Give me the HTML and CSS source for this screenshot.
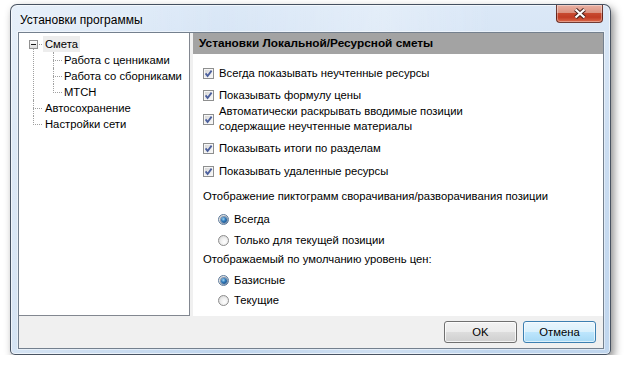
FILE: index.html
```html
<!DOCTYPE html>
<html lang="ru">
<head>
<meta charset="utf-8">
<title>Установки программы</title>
<link rel="stylesheet" href="styles.css">
</head>
<body>
<div class="window">
  <div class="titlebar">
    <span class="title">Установки программы</span>
    <button class="close" aria-label="Закрыть">
      <svg width="14" height="11" viewBox="0 0 14 11"><path d="M2.5 1.5l9 8M11.5 1.5l-9 8" stroke="#4a231d" stroke-width="4.2" fill="none"/><path d="M2.5 1.5l9 8M11.5 1.5l-9 8" stroke="#fff" stroke-width="2.2" fill="none"/></svg>
    </button>
  </div>
  <div class="client">
    <div class="main">
      <div class="tree">
        <ul class="tree-root">
          <li><span class="twisty"></span><span class="lbl sel">Смета</span>
            <ul class="tree-sub">
              <li><span class="lbl">Работа с ценниками</span></li>
              <li><span class="lbl">Работа со сборниками</span></li>
              <li><span class="lbl">МТСН</span></li>
            </ul>
          </li>
          <li><span class="lbl">Автосохранение</span></li>
          <li><span class="lbl">Настройки сети</span></li>
        </ul>
      </div>
      <div class="panel">
        <div class="panel-head">Установки Локальной/Ресурсной сметы</div>
        <div class="panel-body">
          <div class="checks">
            <label class="check"><span class="cb"><svg width="9" height="9" viewBox="0 0 9 9"><path d="M1.6 4.4L3.6 7L7.6 1.6" stroke="#4b5f9d" stroke-width="1.8" fill="none"/></svg></span>Всегда показывать неучтенные ресурсы</label>
            <label class="check"><span class="cb"><svg width="9" height="9" viewBox="0 0 9 9"><path d="M1.6 4.4L3.6 7L7.6 1.6" stroke="#4b5f9d" stroke-width="1.8" fill="none"/></svg></span>Показывать формулу цены</label>
            <label class="check multi"><span class="cb"><svg width="9" height="9" viewBox="0 0 9 9"><path d="M1.6 4.4L3.6 7L7.6 1.6" stroke="#4b5f9d" stroke-width="1.8" fill="none"/></svg></span><span>Автоматически раскрывать вводимые позиции<br>содержащие неучтенные материалы</span></label>
            <label class="check"><span class="cb"><svg width="9" height="9" viewBox="0 0 9 9"><path d="M1.6 4.4L3.6 7L7.6 1.6" stroke="#4b5f9d" stroke-width="1.8" fill="none"/></svg></span>Показывать итоги по разделам</label>
            <label class="check"><span class="cb"><svg width="9" height="9" viewBox="0 0 9 9"><path d="M1.6 4.4L3.6 7L7.6 1.6" stroke="#4b5f9d" stroke-width="1.8" fill="none"/></svg></span>Показывать удаленные ресурсы</label>
          </div>
          <div class="group g-icons">
            <div class="group-label">Отображение пиктограмм сворачивания/разворачивания позиции</div>
            <div class="radios">
              <label class="radio first"><span class="rb on"></span>Всегда</label>
              <label class="radio"><span class="rb"></span>Только для текущей позиции</label>
            </div>
          </div>
          <div class="group g-prices">
            <div class="group-label">Отображаемый по умолчанию уровень цен:</div>
            <div class="radios">
              <label class="radio first"><span class="rb on"></span>Базисные</label>
              <label class="radio"><span class="rb"></span>Текущие</label>
            </div>
          </div>
        </div>
      </div>
    </div>
    <div class="footer">
      <button class="btn">OK</button>
      <button class="btn default">Отмена</button>
    </div>
  </div>
</div>
</body>
</html>
```
FILE: styles.css
```css
* { box-sizing: border-box; }
html, body { margin: 0; background: #fff; }
body {
  font-family: "Liberation Sans", Arial, sans-serif;
  font-size: 11.25px;
  color: #000;
}

.window {
  width: 601px;
  height: 351px;
  margin: 4px 0 0 10px;
  border: 1px solid rgba(35, 45, 60, 0.8);
  border-radius: 7px 7px 5px 5px;
  padding: 0 6px 5px 7px;
  display: flex;
  flex-direction: column;
  background:
    linear-gradient(90deg, rgba(255,255,255,0.35) 0%, rgba(255,255,255,0) 35%, rgba(255,255,255,0.25) 62%, rgba(255,255,255,0) 80%),
    linear-gradient(180deg, #dbe8f7 0%, #cbddf1 40%, #c0d6ee 100%);
  box-shadow: inset 0 0 0 1px rgba(255,255,255,0.6), 3px 4px 8px rgba(0,0,0,0.45);
}

.titlebar {
  height: 27px;
  display: flex;
  justify-content: space-between;
  align-items: flex-start;
}
.title {
  padding: 7px 0 0 2px;
  line-height: 16px;
  font-size: 12px;
  text-shadow: 0 0 6px rgba(255,255,255,0.9);
}
.close {
  width: 47px;
  height: 18px;
  margin-right: 1px;
  padding: 0;
  border: 1px solid rgba(80, 30, 25, 0.8);
  border-top: none;
  border-radius: 0 0 4px 4px;
  display: flex;
  align-items: center;
  justify-content: center;
  background: linear-gradient(180deg, #eab0a2 0%, #dc9482 44%, #c7492f 50%, #c13c24 72%, #dc6a4b 100%);
  box-shadow: inset 0 0 0 1px rgba(255,255,255,0.35);
}

.client {
  height: 317px;
  border: 1px solid #74808e;
  background: #f0f0f0;
  display: flex;
  flex-direction: column;
  box-shadow: 0 0 0 1px rgba(255,255,255,0.45);
}
.main {
  height: 283px;
  display: flex;
  gap: 3px;
}

.tree {
  width: 171px;
  background: #fff;
  border-right: 1px solid #828790;
  border-bottom: 1px solid #828790;
  padding-top: 3px;
}
.tree ul { list-style: none; margin: 0; padding: 0; }
.tree li { position: relative; line-height: 16px; }
.tree-root > li { padding-left: 24px; }
.tree-sub > li { padding-left: 19px; }
.tree li::before {
  content: "";
  position: absolute;
  top: 8px;
  width: 9px;
  border-top: 1px dotted #a0a0a0;
}
.tree li::after {
  content: "";
  position: absolute;
  top: 0;
  bottom: 0;
  border-left: 1px dotted #a0a0a0;
}
.tree-root > li::before, .tree-root > li::after { left: 14px; }
.tree-sub > li::before, .tree-sub > li::after { left: 10px; }
.tree-root > li:first-child::after { top: 8px; }
.tree li:last-child::after { bottom: auto; height: 9px; }
.twisty {
  position: absolute;
  left: 10px;
  top: 4px;
  width: 9px;
  height: 9px;
  z-index: 1;
  border: 1px solid #919191;
  background: linear-gradient(180deg, #ffffff, #dcdcdc);
  display: flex;
  align-items: center;
  justify-content: center;
}
.twisty::after {
  content: "";
  width: 5px;
  height: 1px;
  background: #1a1a1a;
}
.lbl {
  display: inline-block;
  height: 16px;
  padding: 0 2px;
  vertical-align: top;
}
.lbl.sel { background: #ededed; }

.panel { flex: 1; background: #fff; }
.panel-head {
  height: 21px;
  line-height: 21px;
  padding-left: 6px;
  background: #a3a3a3;
  font-weight: bold;
  font-size: 11.8px;
}
.panel-body { padding: 12px 0 0 10px; }

.check, .radio {
  display: flex;
  align-items: center;
  gap: 5px;
  line-height: 15px;
}
.check + .check { margin-top: 7px; }
.check + .check.multi { margin-top: 1px; }
.check.multi + .check { margin-top: 7px; }
.check:last-child { margin-top: 8px; }

.cb {
  width: 11px;
  height: 11px;
  flex: none;
  border: 1px solid #8e8f8f;
  background: linear-gradient(135deg, #d2d2d2 0%, #ececec 60%, #fbfbfb 100%);
  box-shadow: inset 0 0 0 1px #f6f6f6;
  display: flex;
}
.cb svg { display: block; }

.group-label { line-height: 15px; }
.g-icons { margin-top: 10px; }
.g-prices { margin-top: 4px; }
.radios { padding-left: 15px; }
.radio.first { margin-top: 8px; }
.radio + .radio { margin-top: 6px; }
.g-prices .radio.first { margin-top: 6px; }
.g-prices .radio + .radio { margin-top: 5px; }

.rb {
  width: 11px;
  height: 11px;
  flex: none;
  border-radius: 50%;
  border: 1px solid #8d8d8d;
  background: radial-gradient(circle at 60% 65%, #ffffff 0%, #eeeeee 45%, #cdcdcd 100%);
  display: flex;
  align-items: center;
  justify-content: center;
}
.rb.on { border-color: #5f7c9c; }
.rb.on::after {
  content: "";
  width: 6px;
  height: 6px;
  border-radius: 50%;
  background: radial-gradient(circle at 40% 35%, #9fd8f6 0%, #2f78b8 40%, #123d72 100%);
  box-shadow: 0 0 0 1px rgba(30, 70, 120, 0.5);
}

.footer {
  flex: 1;
  display: flex;
  justify-content: flex-end;
  gap: 6px;
  padding: 5px 7px 0 0;
}
.btn {
  width: 73px;
  height: 22px;
  padding: 0;
  border: 1px solid #707070;
  border-radius: 3px;
  font-family: "Liberation Sans", Arial, sans-serif;
  font-size: 11.25px;
  color: #000;
  background: linear-gradient(180deg, #f2f2f2 0%, #ebebeb 50%, #dddddd 50%, #cfcfcf 100%);
  box-shadow: inset 0 0 0 1px rgba(255,255,255,0.75);
}
.btn.default {
  border-color: #3c7fb1;
  background: linear-gradient(180deg, #eaf6fd 0%, #d9f0fc 50%, #bee6fd 50%, #a7d9f5 100%);
  box-shadow: inset 0 0 0 1px rgba(255,255,255,0.6);
}
```
